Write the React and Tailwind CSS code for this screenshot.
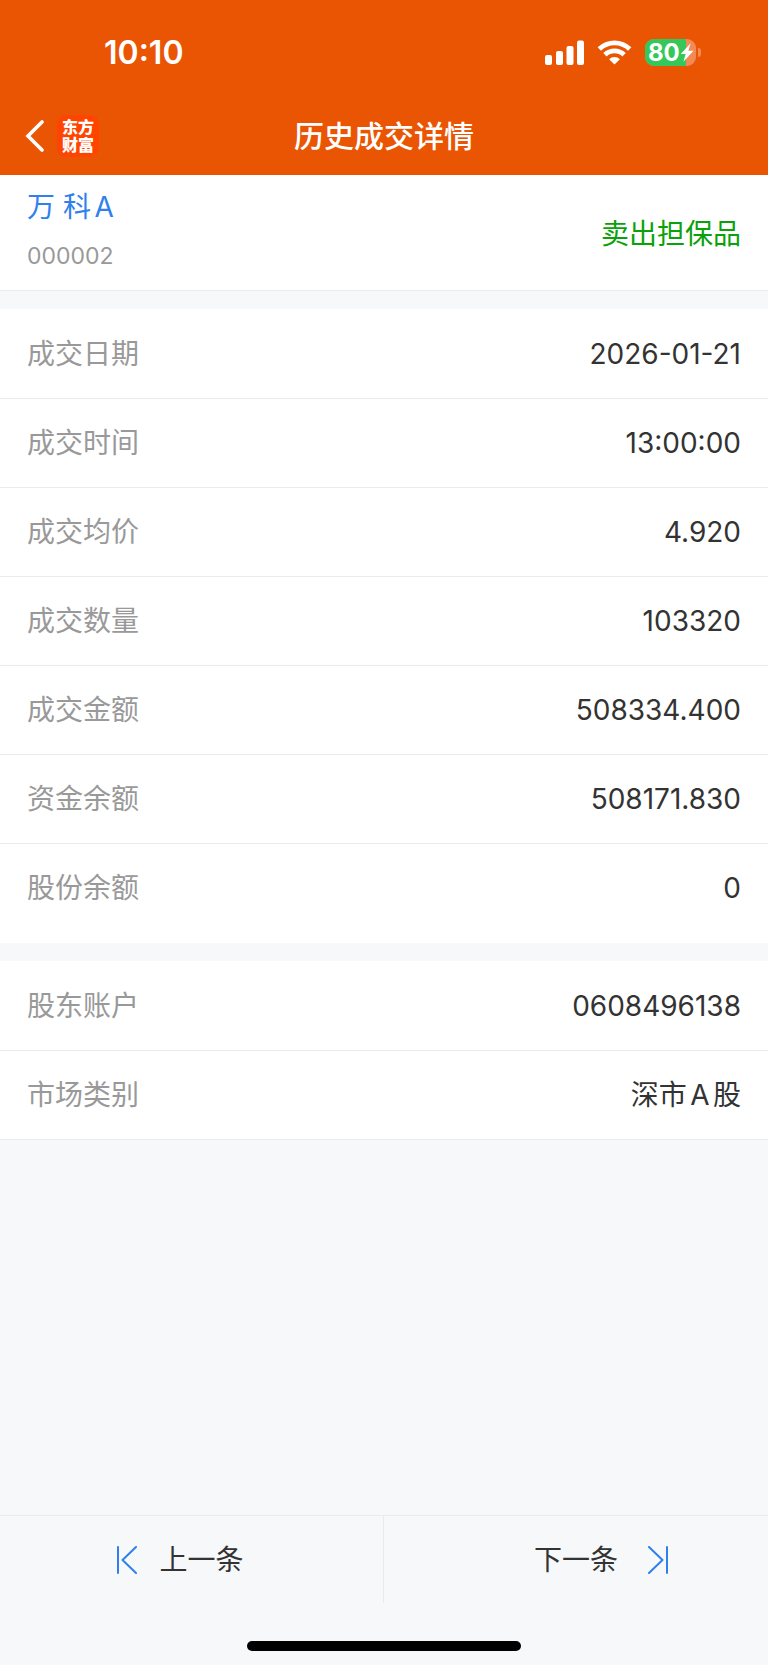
import React from 'react';

const dealRows = [
  { label: '成交日期', value: '2026-01-21' },
  { label: '成交时间', value: '13:00:00' },
  { label: '成交均价', value: '4.920' },
  { label: '成交数量', value: '103320' },
  { label: '成交金额', value: '508334.400' },
  { label: '资金余额', value: '508171.830' },
  { label: '股份余额', value: '0' },
];

const accountRows = [
  { label: '股东账户', value: '0608496138' },
  { label: '市场类别', value: '深市A股' },
];

const SignalIcon = () => (
  <svg className="w-[39px] h-[25px]" viewBox="0 0 39 25" fill="#fff" aria-hidden="true">
    <rect x="0" y="15" width="7" height="10" rx="2" />
    <rect x="11" y="11" width="7" height="14" rx="2" />
    <rect x="21.5" y="6" width="7" height="19" rx="2" />
    <rect x="32" y="0.5" width="7" height="24.5" rx="2" />
  </svg>
);

const WifiIcon = () => (
  <svg className="w-[35px] h-[25px]" viewBox="0 0 36 26" fill="none" stroke="#fff" strokeWidth="5" aria-hidden="true">
    <path d="M2.2 9.4a22.6 22.6 0 0 1 31.6 0" />
    <path d="M8 15.400a14.4 14.4 0 0 1 20 0" />
    <path d="M18 25.500l-5.6-5.600a8 8 0 0 1 11.200 0z" fill="#fff" stroke="none" />
  </svg>
);

const Battery = () => (
  <div className="flex items-center gap-[2px]">
    <div className="relative w-[51px] h-[27px] rounded-[9px] overflow-hidden bg-[#f28a55]">
      <div className="absolute inset-y-0 left-0 w-4/5 bg-[#34c759]" />
      <span className="absolute left-[3px] top-0 text-[24px] leading-[27px] font-bold text-white">80</span>
      <svg className="absolute left-[35px] top-[4px] w-[14px] h-[19px]" viewBox="0 0 14 19" fill="#fff" aria-hidden="true">
        <path d="M10.600 0.200L0.800 11h4.800L3.400 18.800L13.600 7.800H8.400z" />
      </svg>
    </div>
    <div className="w-[3px] h-[9px] rounded-r-full bg-[#f28a55]" />
  </div>
);

const StatusBar = () => (
  <div className="h-[104px] pt-px flex items-center justify-between pl-[104px] pr-[67px]">
    <span className="text-[32px] leading-[40px] font-semibold">10:10</span>
    <div className="flex items-center gap-[13px]">
      <SignalIcon />
      <WifiIcon />
      <Battery />
    </div>
  </div>
);

const NavBar = () => (
  <div className="h-[71px] pb-2 px-6 grid grid-cols-[1fr_auto_1fr] items-center">
    <div className="flex items-center gap-3">
      <button type="button" aria-label="返回">
        <svg className="w-[21px] h-[32px]" viewBox="0 0 21 32" fill="none" stroke="#fff" strokeWidth="3.6" strokeLinecap="round" aria-hidden="true">
          <path d="M18 2L4 16l14 14" />
        </svg>
      </button>
      <div className="w-[42px] h-[42px] rounded-[9px] bg-[#ff4400] flex flex-col items-center justify-center text-[16px] leading-[18px] font-black">
        <span>东方</span>
        <span>财富</span>
      </div>
    </div>
    <h1 className="text-[30px] leading-[40px] font-medium">历史成交详情</h1>
  </div>
);

const DetailRow = ({ label, value }) => (
  <div className="h-[89px] px-[27px] flex items-center justify-between border-b border-[#ebebeb] last:h-[88px] last:border-b-0">
    <dt className="text-[#999999]">{label}</dt>
    <dd className="text-[#333333]">{value}</dd>
  </div>
);

const App = () => {
  return (
    <div className="min-h-screen flex flex-col bg-[#f6f8fa] text-[28px] leading-[40px] font-['Inter','Noto_Sans_CJK_SC',sans-serif] [text-autospace:normal]">
      <header className="bg-[#ea5504] text-white">
        <StatusBar />
        <NavBar />
      </header>

      <main className="flex-1">
        {/* Stock summary */}
        <section className="h-[116px] pt-[2px] px-[27px] flex items-center justify-between bg-white border-b border-[#ebebeb]">
          <div className="pb-1">
            <h2 className="leading-[49px] text-[#2f80ed]">万 科A</h2>
            <p className="text-[23px] leading-[49px] text-[#999999]">000002</p>
          </div>
          <span className="text-[#0aa10a]">卖出担保品</span>
        </section>

        {/* Deal details */}
        <dl className="mt-[18px] pt-px pb-[11px] bg-white">
          {dealRows.map((row) => (
            <DetailRow key={row.label} {...row} />
          ))}
        </dl>

        {/* Account details */}
        <dl className="mt-[18px] pt-px bg-white border-b border-[#ebebeb]">
          {accountRows.map((row) => (
            <DetailRow key={row.label} {...row} />
          ))}
        </dl>
      </main>

      <footer className="border-t border-[#ebebeb]">
        <div className="h-[87px] grid grid-cols-2 text-[#333333]">
          <button type="button" className="flex items-center justify-center gap-[22px] pr-[22px] border-r border-[#ebebeb]">
            <svg className="w-[20px] h-[28px]" viewBox="0 0 20 28" fill="none" stroke="#2f80ed" strokeWidth="2" strokeLinecap="round" strokeLinejoin="round" aria-hidden="true">
              <path d="M1 1v26M19 1L5.500 14L19 27" />
            </svg>
            <span>上一条</span>
          </button>
          <button type="button" className="flex items-center justify-center gap-[30px] pl-[50px]">
            <span>下一条</span>
            <svg className="w-[20px] h-[28px]" viewBox="0 0 20 28" fill="none" stroke="#2f80ed" strokeWidth="2" strokeLinecap="round" strokeLinejoin="round" aria-hidden="true">
              <path d="M19 1v26M1 1L14.500 14L1 27" />
            </svg>
          </button>
        </div>
        <div className="h-[62px] pb-[14px] flex items-end justify-center">
          <div className="w-[274px] h-[10px] rounded-full bg-black" />
        </div>
      </footer>
    </div>
  );
};

export default App;
